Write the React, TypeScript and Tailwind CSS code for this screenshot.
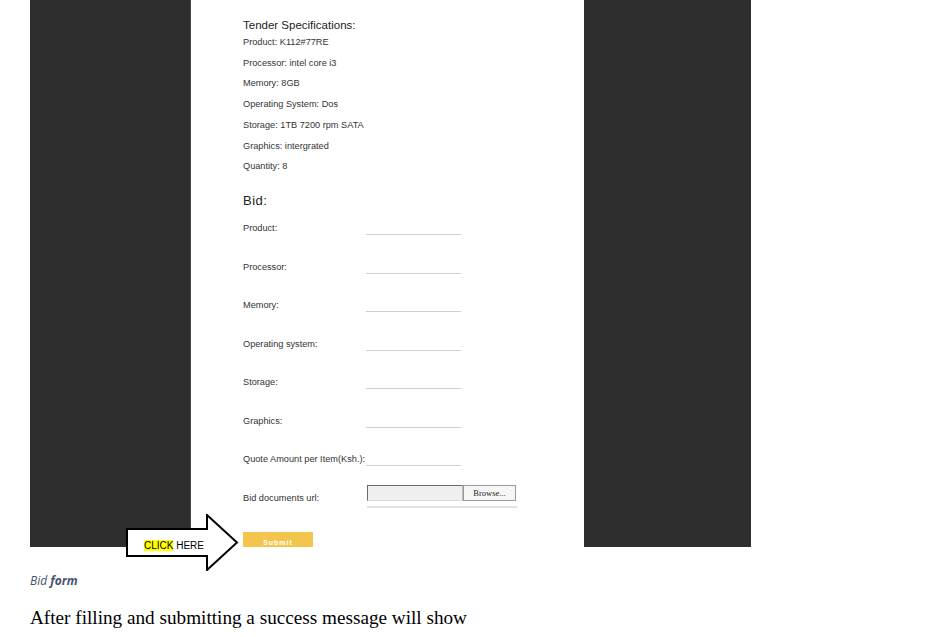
import React from 'react';

const specs = [
  'Product: K112#77RE',
  'Processor: intel core i3',
  'Memory: 8GB',
  'Operating System: Dos',
  'Storage: 1TB 7200 rpm SATA',
  'Graphics: intergrated',
  'Quantity: 8',
];

const fields = [
  'Product:',
  'Processor:',
  'Memory:',
  'Operating system:',
  'Storage:',
  'Graphics:',
  'Quote Amount per Item(Ksh.):',
];

function ClickHereArrow() {
  return (
    <div className="absolute left-[126px] top-[514px] h-[57px] w-[113px]">
      <svg width="113" height="57" viewBox="0 0 113 57" className="absolute inset-0">
        <polygon
          points="1,15 81,15 81,1 111,28.5 81,56 81,42 1,42"
          fill="#ffffff"
          stroke="#000000"
          strokeWidth="2"
          strokeLinejoin="miter"
        />
      </svg>
      <div className="absolute left-[18px] top-[24.5px] text-[10px] leading-[13px] text-black font-['Liberation_Sans',Arial,sans-serif]">
        <span className="bg-[#ffff00]">CLICK</span> HERE
      </div>
    </div>
  );
}

export default function App() {
  return (
    <div className="relative h-[637px] w-[946px] overflow-hidden bg-white">
      {/* screenshot of the bid page */}
      <div className="ml-[30px] flex h-[547px] w-[721px] bg-[#2e2e2e]">
        <div className="ml-[160px] h-full w-[394px] overflow-hidden border-l border-[#4a4a4a] bg-white pl-[52px] pt-[18px] font-['Liberation_Sans',Arial,sans-serif] text-[#333]">
          <h2 className="text-[11.5px] leading-[14px] text-[#222]">Tender Specifications:</h2>
          <div className="flex flex-col">
            {specs.map((s) => (
              <p key={s} className="text-[9.2px] leading-[20.7px]">
                {s}
              </p>
            ))}
          </div>

          <h2 className="mt-[16px] text-[13px] leading-[16px] tracking-[0.5px] text-[#222]">Bid:</h2>

          <div className="mt-[13.5px] flex flex-col">
            {fields.map((f) => (
              <div key={f} className="flex h-[38.5px] items-start">
                <span className="w-[123px] whitespace-nowrap text-[9.2px] leading-[12px]">{f}</span>
                <div className="h-[13px] w-[95px] border-b border-[#cfcfcf]" />
              </div>
            ))}
            <div className="flex h-[38.5px] items-start">
              <span className="w-[124px] whitespace-nowrap text-[9.2px] leading-[12px]">Bid documents url:</span>
              <div className="-mt-[7px] flex w-[150px] flex-col">
                <div className="flex h-[16px]">
                  <div className="h-[16px] w-[96px] border border-t-[#6a6a6a] border-l-[#6a6a6a] border-r-[#bbb] border-b-[#ddd] bg-[#efefef]" />
                  <div className="flex h-[16px] w-[53px] items-center justify-center border border-[#9a9a9a] bg-[#f6f6f6] font-['Liberation_Serif',serif] text-[8.5px] text-[#222]">
                    Browse...
                  </div>
                </div>
                <div className="mt-[5px] h-[2px] w-[150px] bg-[#e2e2e2]" />
              </div>
            </div>
          </div>

          <button className="mt-[1.5px] flex h-[22px] w-[70px] items-center justify-center bg-[#f3c54c] text-[7px] font-bold tracking-[1px] text-white">
            Submit
          </button>
        </div>
      </div>

      <ClickHereArrow />

      <p className="ml-[30px] mt-[26px] font-['Open_Sans',sans-serif] text-[12px] italic leading-[16px] text-[#44546a]">
        Bid <span className="font-bold">form</span>
      </p>
      <p className="ml-[30px] mt-[17px] font-['Liberation_Serif','Times_New_Roman',serif] text-[19.2px] leading-[24px] text-black">
        After filling and submitting a success message will show
      </p>
    </div>
  );
}
